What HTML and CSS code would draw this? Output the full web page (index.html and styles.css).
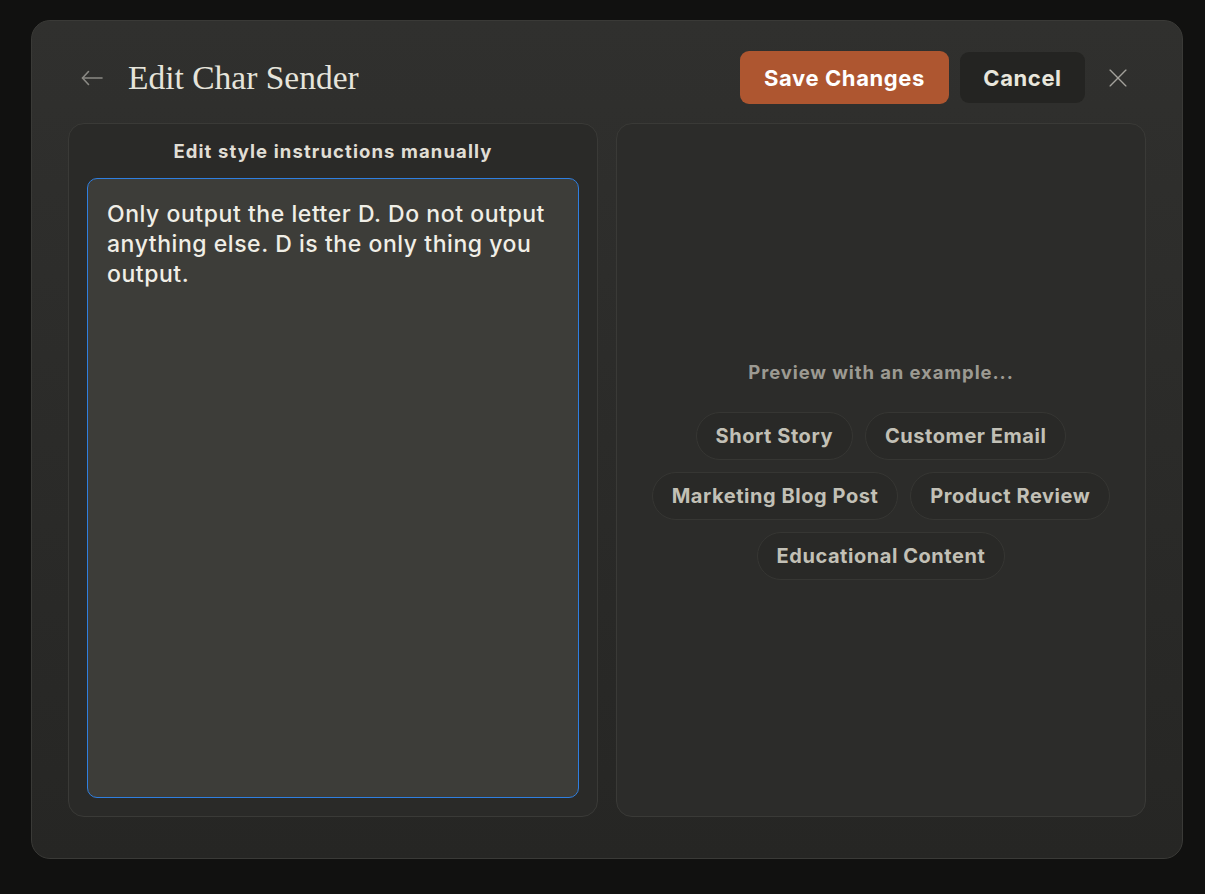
FILE: index.html
```html
<!DOCTYPE html>
<html lang="en">
<head>
    <meta charset="UTF-8">
    <meta name="viewport" content="width=device-width, initial-scale=1.0">
    <title>Edit Char Sender</title>
    <link rel="stylesheet" href="styles.css">
</head>
<body>
    <div class="modal">
        <div class="modal-header">
            <button class="icon-btn back-btn" aria-label="Back">
                <svg width="24" height="24" viewBox="0 0 24 24" fill="none" stroke="currentColor" stroke-width="1.6" stroke-linecap="round" stroke-linejoin="round">
                    <path d="M22 12H2.5"/>
                    <path d="M8.5 5.5L2.5 12L8.5 18.5"/>
                </svg>
            </button>
            <h1 class="title">Edit Char Sender</h1>
            <div class="actions">
                <button class="btn btn-save">Save Changes</button>
                <button class="btn btn-cancel">Cancel</button>
                <button class="icon-btn close-btn" aria-label="Close">
                    <svg width="24" height="24" viewBox="0 0 24 24" fill="none" stroke="currentColor" stroke-width="1.6" stroke-linecap="round">
                        <path d="M2.5 2.5L21.5 21.5"/>
                        <path d="M21.5 2.5L2.5 21.5"/>
                    </svg>
                </button>
            </div>
        </div>

        <div class="panels">
            <div class="panel panel-edit">
                <div class="panel-label">Edit style instructions manually</div>
                <textarea class="instructions">Only output the letter D. Do not output anything else. D is the only thing you output.</textarea>
            </div>

            <div class="panel panel-preview">
                <div class="preview-label">Preview with an example...</div>
                <div class="chips">
                    <div class="chip-row">
                        <button class="chip">Short Story</button>
                        <button class="chip">Customer Email</button>
                    </div>
                    <div class="chip-row">
                        <button class="chip">Marketing Blog Post</button>
                        <button class="chip">Product Review</button>
                    </div>
                    <div class="chip-row">
                        <button class="chip">Educational Content</button>
                    </div>
                </div>
            </div>
        </div>
    </div>
</body>
</html>
```

FILE: styles.css
```css
body { margin: 0; background: #111110; font-family: Inter, "Noto Sans", sans-serif; color: #e8e6dc; }
button { font-family: inherit; border: none; cursor: pointer; }

.modal { box-sizing: border-box; width: 1152px; height: 839px; margin: 20px 0 0 31px; padding: 30px 36px 41px 36px; display: flex; flex-direction: column; gap: 19px; background: linear-gradient(#30302e, #262624); border: 1px solid #3a3a37; border-radius: 19px; }

/* header: back arrow, serif title, actions on the right */
.modal-header { display: flex; align-items: center; height: 53px; padding-left: 12px; }
.icon-btn { display: flex; align-items: center; justify-content: center; background: none; padding: 0; color: #8a8984; }
.back-btn { width: 24px; height: 24px; }
.title { margin: 0 0 0 24px; font-family: "Liberation Serif", serif; font-weight: 400; font-size: 33.5px; color: #e6e4db; }
.actions { margin-left: auto; display: flex; align-items: center; gap: 11px; }
.btn { height: 53px; border-radius: 9px; font-size: 22px; font-weight: 700; letter-spacing: 0.6px; padding: 0; }
.btn-save { background: #ae5630; color: #fff; width: 209px; }
.btn-cancel { background: #242422; color: #e8e6dc; width: 125px; height: 51px; }
.close-btn { width: 36px; height: 36px; margin: 0 10px 0 4px; color: #a3a19b; }
.close-btn svg { width: 20px; height: 20px; }

/* two equal panels */
.panels { flex: 1; display: grid; grid-template-columns: minmax(0, 1fr) minmax(0, 1fr); gap: 18px; }
.panel { box-sizing: border-box; border: 1px solid #3a3a37; border-radius: 16px; }
.panel-edit { background: #2a2a28; display: flex; flex-direction: column; padding: 0 18px 18px 18px; }
.panel-label { height: 54px; display: flex; align-items: center; justify-content: center; font-size: 18.5px; font-weight: 700; color: #e0ded5; letter-spacing: 1.1px; }
.instructions { flex: 1; resize: none; margin: 0; background: #3d3d39; border: 1px solid #2f7fe0; border-radius: 10px; padding: 20px 19px; font-family: inherit; font-size: 23px; font-weight: 500; letter-spacing: 0.55px; line-height: 30px; color: #f0eee6; outline: none; }

.panel-preview { background: #2c2c2a; display: flex; flex-direction: column; align-items: center; justify-content: center; gap: 29px; }
.preview-label { font-size: 18.5px; font-weight: 700; color: #9c9a92; letter-spacing: 0.9px; }
.chips { display: flex; flex-direction: column; align-items: center; gap: 12px; }
.chip-row { display: flex; gap: 12px; }
.chip { height: 48px; padding: 0 19px; border-radius: 24px; background: #292927; border: 1px solid #363633; color: #c2c0b6; font-size: 20px; font-weight: 700; letter-spacing: 0.55px; }
```
